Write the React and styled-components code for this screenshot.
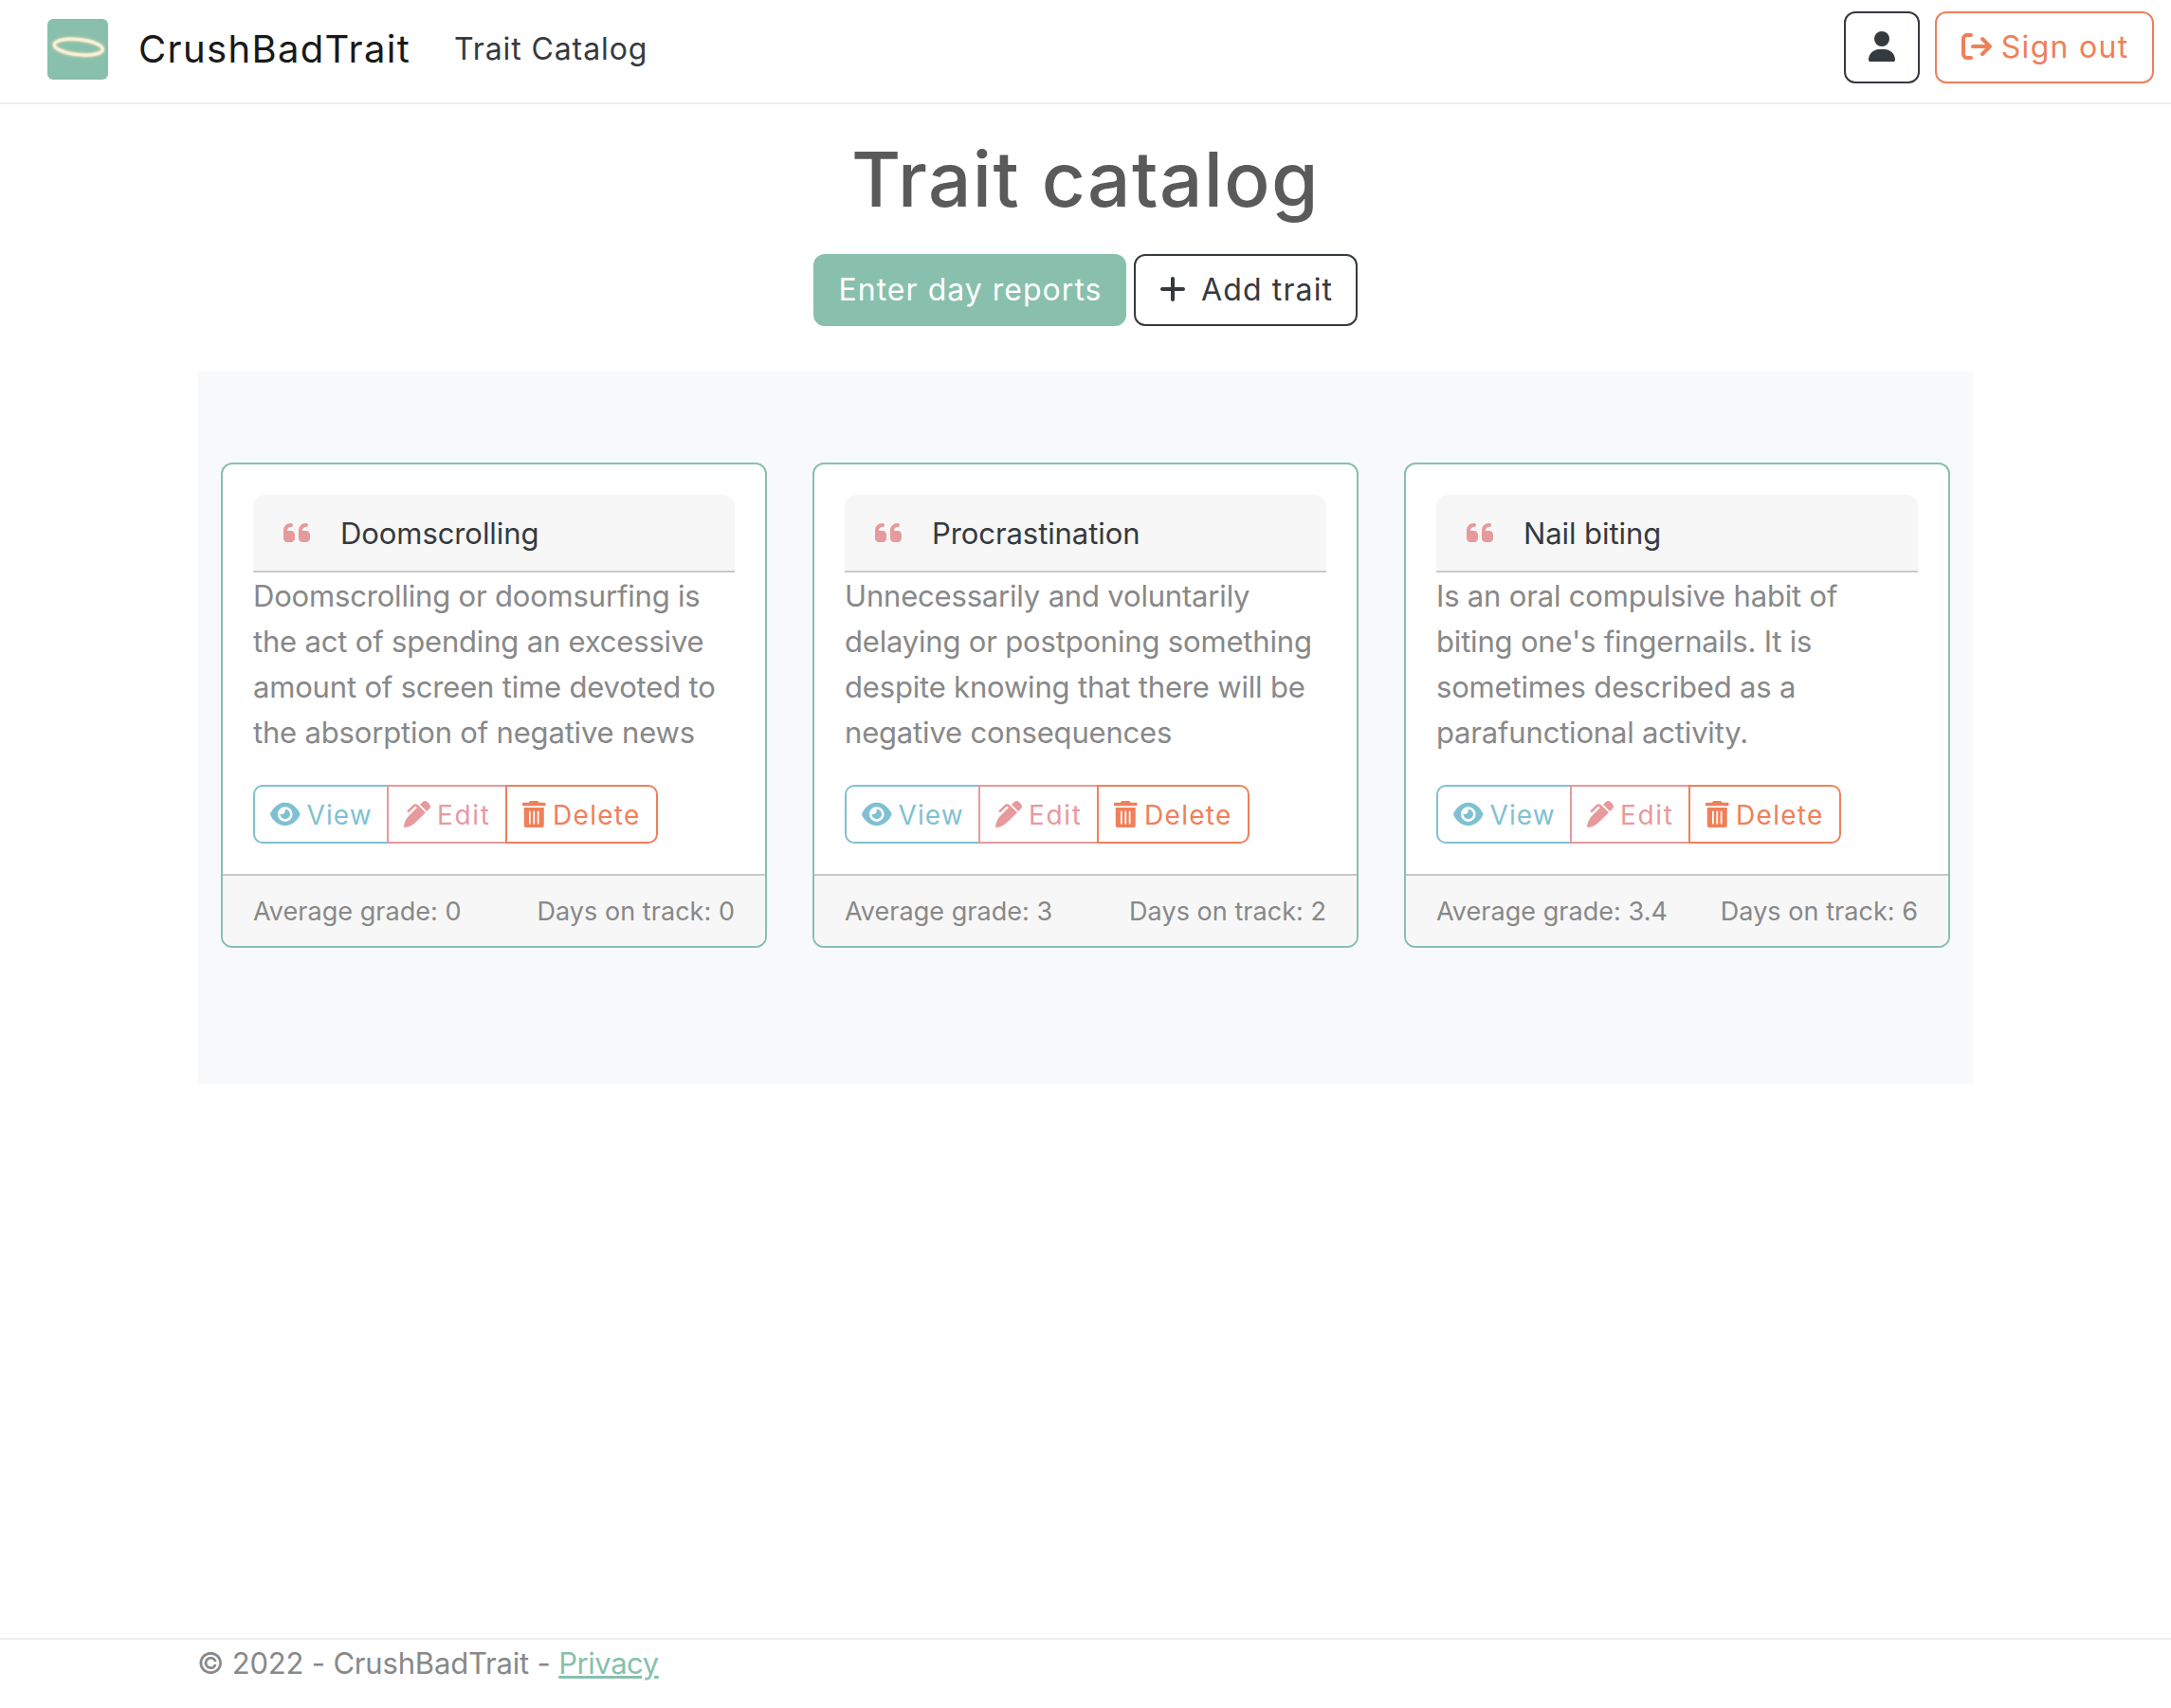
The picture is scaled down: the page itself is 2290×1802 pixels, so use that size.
import React from 'react';
import styled, { createGlobalStyle } from 'styled-components';
import {
  FaUser,
  FaPlus,
  FaQuoteLeft,
  FaEye,
  FaPenClip,
  FaArrowRightFromBracket,
} from 'react-icons/fa6';

const colors = {
  primary: '#88c0ad',
  secondary: '#e79a9c',
  info: '#7fc1d2',
  danger: '#ef8059',
  dark: '#353a3f',
  muted: '#888888',
  heading: '#5a5a5a',
  line: '#c9c9c9',
  cap: '#f7f7f7',
};

const GlobalStyle = createGlobalStyle`
  *, *::before, *::after { box-sizing: border-box; }
  body {
    margin: 0;
    background: #fff;
    color: ${colors.muted};
    font-family: Inter, "Liberation Sans", sans-serif;
    font-size: 31px;
    line-height: 48px;
    letter-spacing: -0.18px;
  }
  h1, h2, p { margin: 0; font-weight: 400; }
`;

const Page = styled.div`
  display: flex;
  flex-direction: column;
  min-height: 100vh;
`;

const Navbar = styled.header`
  display: flex;
  align-items: flex-start;
  justify-content: space-between;
  height: 110px;
  padding: 12px 18px 0 50px;
  border-bottom: 2px solid #eeeeee;
`;

const NavGroup = styled.div`
  display: flex;
  align-items: center;
  gap: ${(p) => p.$gap}px;
`;

const NavLeft = styled(NavGroup)`
  height: 80px;
`;

const Brand = styled.a`
  width: 301px;
  color: #191919;
  font-size: 40px;
  letter-spacing: 1.35px;
  white-space: nowrap;
`;

const NavLink = styled.a`
  color: ${colors.dark};
  font-size: 32px;
  letter-spacing: 0.9px;
`;

const Button = styled.button`
  display: flex;
  align-items: center;
  justify-content: center;
  gap: ${(p) => p.$gap || 0}px;
  width: ${(p) => p.$width}px;
  height: 76px;
  padding: 0 0 0 ${(p) => p.$tracking || 0}px;
  border: 2px solid ${(p) => colors[p.$tone]};
  border-radius: 12px;
  background: ${(p) => (p.$solid ? colors[p.$tone] : 'transparent')};
  color: ${(p) => (p.$solid ? '#fff' : colors[p.$tone])};
  font: inherit;
  font-size: 32px;
  letter-spacing: ${(p) => p.$tracking || 0}px;
  white-space: nowrap;

  svg {
    flex: none;
    width: ${(p) => p.$icon || 28}px;
    height: 32px;
    margin-bottom: 2px;
  }
`;

const Main = styled.main`
  flex: 1;
  width: 1872px;
  margin: 0 auto;
`;

const Title = styled.h1`
  margin: 31px 0;
  color: ${colors.heading};
  font-size: 80px;
  font-weight: 520;
  line-height: 96px;
  letter-spacing: 1.4px;
  text-align: center;
`;

const Actions = styled.div`
  display: flex;
  justify-content: center;
  gap: 8px;
  margin-bottom: 48px;
`;

const Catalog = styled.section`
  display: grid;
  grid-template-columns: repeat(3, 1fr);
  gap: 48px;
  padding: 96px 24px 144px;
  background: #f8f9fb;
`;

const Card = styled.article`
  display: flex;
  flex-direction: column;
  height: 512px;
  border: 2px solid ${colors.primary};
  border-radius: 12px;
  background: #fff;
  overflow: hidden;
`;

const CardBody = styled.div`
  flex: 1;
  padding: 32px;
`;

const CardHeader = styled.div`
  display: flex;
  align-items: center;
  gap: 32px;
  height: 82px;
  padding: 0 32px;
  border-bottom: 2px solid ${colors.line};
  border-radius: 12px 12px 0 0;
  background: ${colors.cap};
  color: ${colors.secondary};

  svg {
    width: 28px;
    height: 32px;
  }
`;

const CardTitle = styled.h2`
  padding-top: 2px;
  color: ${colors.dark};
  font-size: 31px;
  font-weight: 430;
  line-height: 48px;
  letter-spacing: -0.08px;
`;

const Description = styled.p`
  padding-top: 1px;
  margin-bottom: 31px;
  font-weight: 420;
`;

const ButtonGroup = styled.div`
  display: flex;
`;

const GroupButton = styled.button`
  display: flex;
  align-items: center;
  gap: ${(p) => p.$gap}px;
  width: ${(p) => p.$width}px;
  height: 62px;
  padding: 2px 0 0 16px;
  border: 2px solid ${(p) => colors[p.$tone]};
  background: #fff;
  color: ${(p) => colors[p.$tone]};
  font: inherit;
  font-size: 28px;
  letter-spacing: ${(p) => p.$tracking}px;

  &:first-child { border-radius: 10px 0 0 10px; }
  &:last-child { border-radius: 0 10px 10px 0; }
  & + & { margin-left: -2px; }

  svg {
    flex: none;
    width: ${(p) => p.$icon}px;
    height: 28px;
    margin-bottom: 2px;
  }
`;

const CardFooter = styled.div`
  display: flex;
  justify-content: space-between;
  padding: 17px 32px 15px;
  border-top: 2px solid ${colors.line};
  background: ${colors.cap};
  font-size: 27px;
  font-weight: 420;
  line-height: 42px;
  letter-spacing: 0.04px;
`;

const Footer = styled.footer`
  height: 74px;
  padding-left: 208px;
  border-top: 2px solid #eeeeee;
  font-weight: 420;
  line-height: 50px;
`;

const FooterLink = styled.a`
  color: ${colors.primary};
  letter-spacing: -0.45px;
  text-decoration: underline;
  text-decoration-thickness: 3px;
  text-underline-offset: 2px;
`;

function Logo() {
  return (
    <svg width="64" height="64" viewBox="0 0 64 64">
      <defs>
        <filter id="glow" x="-20%" y="-40%" width="140%" height="180%">
          <feGaussianBlur stdDeviation="1" />
        </filter>
        <filter id="soft" x="-20%" y="-40%" width="140%" height="180%">
          <feGaussianBlur stdDeviation="0.5" />
        </filter>
      </defs>
      <rect width="64" height="64" rx="6" fill={colors.primary} />
      <g fill="none" transform="rotate(6 32.8 29.7)">
        <ellipse cx="32.8" cy="29.7" rx="25.6" ry="8" stroke="#dfdba6" strokeWidth="4.8" filter="url(#glow)" />
        <ellipse cx="32.8" cy="29.7" rx="25.6" ry="8" stroke="#f8efdc" strokeWidth="3.2" filter="url(#soft)" />
      </g>
    </svg>
  );
}

function TrashIcon() {
  return (
    <svg viewBox="0 0 448 512" fill="currentColor">
      <path
        fillRule="evenodd"
        d="M32 464a48 48 0 0 0 48 48h288a48 48 0 0 0 48-48V128H32zM128 208a16 16 0 0 1 32 0v224a16 16 0 0 1-32 0zM208 208a16 16 0 0 1 32 0v224a16 16 0 0 1-32 0zM288 208a16 16 0 0 1 32 0v224a16 16 0 0 1-32 0zM432 32H320l-11.600-23.300A16 16 0 0 0 294.100 0H153.900a16 16 0 0 0-14.300 8.700L128 32H16A16 16 0 0 0 0 48v32a16 16 0 0 0 16 16h416a16 16 0 0 0 16-16V48a16 16 0 0 0-16-16z"
      />
    </svg>
  );
}

const traits = [
  {
    name: 'Doomscrolling',
    text: 'Doomscrolling or doomsurfing is the act of spending an excessive amount of screen time devoted to the absorption of negative news',
    grade: '0',
    days: '0',
  },
  {
    name: 'Procrastination',
    text: 'Unnecessarily and voluntarily delaying or postponing something despite knowing that there will be negative consequences',
    grade: '3',
    days: '2',
  },
  {
    name: 'Nail biting',
    text: "Is an oral compulsive habit of biting one's fingernails. It is sometimes described as a parafunctional activity.",
    grade: '3.4',
    days: '6',
  },
];

function TraitCard({ trait }) {
  return (
    <Card>
      <CardBody>
        <CardHeader>
          <FaQuoteLeft />
          <CardTitle>{trait.name}</CardTitle>
        </CardHeader>
        <Description>{trait.text}</Description>
        <ButtonGroup>
          <GroupButton $tone="info" $width={143} $icon={31.5} $gap={7} $tracking={1.1}>
            <FaEye />
            View
          </GroupButton>
          <GroupButton $tone="secondary" $width={127} $icon={28} $gap={7} $tracking={1.7}>
            <FaPenClip />
            Edit
          </GroupButton>
          <GroupButton $tone="danger" $width={161} $icon={24.5} $gap={7.5} $tracking={1.3}>
            <TrashIcon />
            Delete
          </GroupButton>
        </ButtonGroup>
      </CardBody>
      <CardFooter>
        <span>Average grade: {trait.grade}</span>
        <span>Days on track: {trait.days}</span>
      </CardFooter>
    </Card>
  );
}

export default function App() {
  return (
    <Page>
      <GlobalStyle />
      <Navbar>
        <NavLeft $gap={32}>
          <Logo />
          <Brand>CrushBadTrait</Brand>
          <NavLink>Trait Catalog</NavLink>
        </NavLeft>
        <NavGroup $gap={16}>
          <Button $tone="dark" $width={80}>
            <FaUser />
          </Button>
          <Button $tone="danger" $width={231} $icon={32} $gap={10} $tracking={1.29}>
            <FaArrowRightFromBracket />
            Sign out
          </Button>
        </NavGroup>
      </Navbar>
      <Main>
        <Title>Trait catalog</Title>
        <Actions>
          <Button $tone="primary" $solid $width={330} $tracking={1.02}>
            Enter day reports
          </Button>
          <Button $tone="dark" $width={236} $gap={16} $tracking={1.15}>
            <FaPlus />
            Add trait
          </Button>
        </Actions>
        <Catalog>
          {traits.map((trait) => (
            <TraitCard key={trait.name} trait={trait} />
          ))}
        </Catalog>
      </Main>
      <Footer>
        © 2022 - CrushBadTrait - <FooterLink>Privacy</FooterLink>
      </Footer>
    </Page>
  );
}
